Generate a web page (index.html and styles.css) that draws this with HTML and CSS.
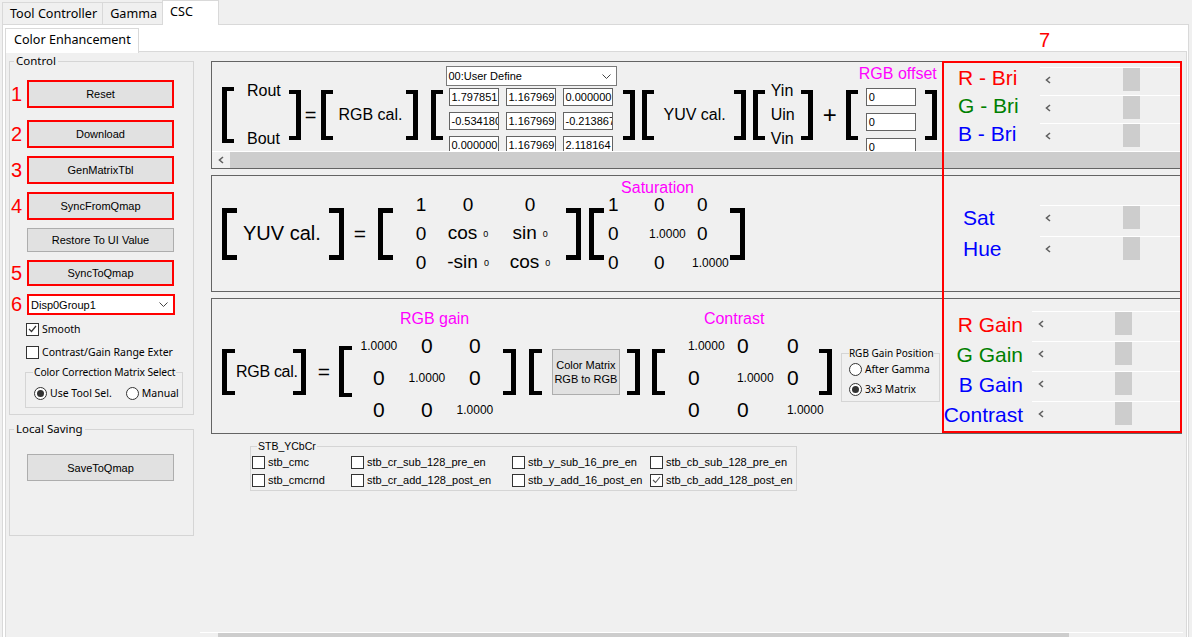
FILE: index.html
```html
<!DOCTYPE html>
<html lang="en">
<head>
  <meta charset="UTF-8">
  <title>CSC - Color Enhancement</title>
  <link rel="stylesheet" href="styles.css">
</head>
<body>

<div class="tabs">
  <div class="tab">Tool Controller</div>
  <div class="tab">Gamma</div>
  <div class="tab active">CSC</div>
</div>

<div class="tabpage">
  <div class="subtabs">
    <div class="subtab">Color Enhancement</div>
  </div>

  <div class="subpage">
    <div class="layout">

      <!-- left control column -->
      <div class="side">
        <fieldset class="group control">
          <legend>Control</legend>
          <div class="stack">
            <div class="btn-row first"><span class="num">1</span><button class="btn marked">Reset</button></div>
            <div class="btn-row"><span class="num">2</span><button class="btn marked">Download</button></div>
            <div class="btn-row"><span class="num">3</span><button class="btn marked">GenMatrixTbl</button></div>
            <div class="btn-row"><span class="num">4</span><button class="btn marked">SyncFromQmap</button></div>
            <div class="btn-row short"><span class="num"></span><button class="btn">Restore To UI Value</button></div>
            <div class="btn-row mid"><span class="num">5</span><button class="btn marked">SyncToQmap</button></div>
            <div class="btn-row combo-row"><span class="num">6</span>
              <div class="combo marked">Disp0Group1
                <svg width="9" height="5" viewBox="0 0 9 5"><path d="M0.5 0.5 L4.5 4.5 L8.5 0.5" fill="none" stroke="#444"/></svg>
              </div>
            </div>
            <label class="check smooth"><span class="box"><svg width="9" height="8" viewBox="0 0 9 8"><path d="M1 4 L3.5 6.5 L8 1" fill="none" stroke="#333" stroke-width="1.2"/></svg></span>Smooth</label>
            <label class="check range"><span class="box"></span>Contrast/Gain Range Exter</label>
            <fieldset class="group ccm">
              <legend>Color Correction Matrix Select</legend>
              <div class="radios">
                <label class="radio"><span class="dot on"></span>Use Tool Sel.</label>
                <label class="radio"><span class="dot"></span>Manual</label>
              </div>
            </fieldset>
          </div>
        </fieldset>

        <fieldset class="group saving">
          <legend>Local Saving</legend>
          <button class="btn">SaveToQmap</button>
        </fieldset>
      </div>

      <!-- formula panels -->
      <div class="main">
        <span class="mark7">7</span>
        <div class="redbox"></div>

        <div class="panel p1">
          <div class="view">
            <div class="formula">
              <span class="br open tall ml10"></span>
              <div class="pair ml13"><span>Rout</span><span>Bout</span></div>
              <span class="br close ml8"></span>
              <span class="eq ml4">=</span>
              <span class="br open ml5"></span>
              <span class="term ml5">RGB cal.</span>
              <span class="br close ml3"></span>
              <span class="br open ml13"></span>
              <div class="cells ml3">
                <div class="combo">00:User Define
                  <svg width="9" height="5" viewBox="0 0 9 5"><path d="M0.5 0.5 L4.5 4.5 L8.5 0.5" fill="none" stroke="#444"/></svg>
                </div>
                <div class="fields">
                  <span class="field">1.797851</span><span class="field">1.167969</span><span class="field">0.000000</span>
                  <span class="field">-0.534180</span><span class="field">1.167969</span><span class="field">-0.213867</span>
                  <span class="field">0.000000</span><span class="field">1.167969</span><span class="field">2.118164</span>
                </div>
              </div>
              <span class="br close ml6"></span>
              <span class="br open ml7"></span>
              <span class="term ml10">YUV cal.</span>
              <span class="br close ml8"></span>
              <span class="br open ml7"></span>
              <div class="vec ml6"><span>Yin</span><span>Uin</span><span>Vin</span></div>
              <span class="br close ml6"></span>
              <span class="op ml10">+</span>
              <span class="br open ml9"></span>
              <div class="offsets ml8">
                <span class="tag">RGB offset</span>
                <span class="field">0</span><span class="field">0</span><span class="field">0</span>
              </div>
              <span class="br close ml9"></span>
            </div>

            <div class="sliders">
              <div class="slider"><span class="sl-label red">R - Bri</span><div class="track"><svg class="larr" width="6" height="8" viewBox="0 0 6 8"><path d="M5 1 L1.5 4 L5 7" fill="none" stroke="#606060" stroke-width="1.6"/></svg><span class="knob"></span></div></div>
              <div class="slider"><span class="sl-label green">G - Bri</span><div class="track"><svg class="larr" width="6" height="8" viewBox="0 0 6 8"><path d="M5 1 L1.5 4 L5 7" fill="none" stroke="#606060" stroke-width="1.6"/></svg><span class="knob"></span></div></div>
              <div class="slider"><span class="sl-label blue">B - Bri</span><div class="track"><svg class="larr" width="6" height="8" viewBox="0 0 6 8"><path d="M5 1 L1.5 4 L5 7" fill="none" stroke="#606060" stroke-width="1.6"/></svg><span class="knob"></span></div></div>
            </div>
          </div>
          <div class="hscroll">
            <span class="sarrow"><svg width="6" height="8" viewBox="0 0 6 8"><path d="M5 1 L1.5 4 L5 7" fill="none" stroke="#606060" stroke-width="1.6"/></svg></span>
            <span class="sthumb"></span>
          </div>
        </div>

        <div class="panel p2">
          <div class="formula">
            <span class="br open ml10"></span>
            <span class="term ml6">YUV cal.</span>
            <span class="br close ml8"></span>
            <span class="eq ml10">=</span>
            <span class="br open ml12"></span>
            <div class="mx rot ml16">
              <span>1</span><span>0</span><span>0</span>
              <span>0</span><span>cos<small>0</small></span><span>sin<small>0</small></span>
              <span>0</span><span>-sin<small>0</small></span><span>cos<small>0</small></span>
            </div>
            <span class="br close ml9"></span>
            <span class="br open ml8"></span>
            <div class="mx-wrap sat">
              <span class="tag">Saturation</span>
              <div class="mx diag">
                <span class="d">1</span><span class="d">0</span><span class="d">0</span>
                <span class="d">0</span><span class="s">1.0000</span><span class="d">0</span>
                <span class="d">0</span><span class="d">0</span><span class="s">1.0000</span>
              </div>
            </div>
            <span class="br close"></span>
          </div>

          <div class="sliders">
            <div class="slider"><span class="sl-label blue">Sat</span><div class="track"><svg class="larr" width="6" height="8" viewBox="0 0 6 8"><path d="M5 1 L1.5 4 L5 7" fill="none" stroke="#606060" stroke-width="1.6"/></svg><span class="knob"></span></div></div>
            <div class="slider"><span class="sl-label blue">Hue</span><div class="track"><svg class="larr" width="6" height="8" viewBox="0 0 6 8"><path d="M5 1 L1.5 4 L5 7" fill="none" stroke="#606060" stroke-width="1.6"/></svg><span class="knob"></span></div></div>
          </div>
        </div>

        <div class="panel p3">
          <div class="formula">
            <span class="br open ml10"></span>
            <span class="term ml1">RGB cal.</span>
            <span class="br close mln5"></span>
            <span class="eq ml12">=</span>
            <span class="br open tall ml9"></span>
            <div class="mx-wrap gain ml7">
              <span class="tag">RGB gain</span>
              <div class="mx unit">
                <span class="s">1.0000</span><span>0</span><span>0</span>
                <span>0</span><span class="s">1.0000</span><span>0</span>
                <span>0</span><span>0</span><span class="s">1.0000</span>
              </div>
            </div>
            <span class="br close ml8"></span>
            <span class="br open ml13"></span>
            <button class="btn mtx ml10">Color Matrix<br>RGB to RGB</button>
            <span class="br close ml7"></span>
            <span class="br open ml12"></span>
            <div class="mx-wrap contrast ml23">
              <span class="tag">Contrast</span>
              <div class="mx unit left">
                <span class="s">1.0000</span><span>0</span><span>0</span>
                <span>0</span><span class="s">1.0000</span><span>0</span>
                <span>0</span><span>0</span><span class="s">1.0000</span>
              </div>
            </div>
            <span class="br close mln5"></span>
            <fieldset class="group gainpos ml9">
              <legend>RGB Gain Position</legend>
              <label class="radio"><span class="dot"></span>After Gamma</label>
              <label class="radio"><span class="dot on"></span>3x3 Matrix</label>
            </fieldset>
          </div>

          <div class="sliders">
            <div class="slider"><span class="sl-label red">R Gain</span><div class="track"><svg class="larr" width="6" height="8" viewBox="0 0 6 8"><path d="M5 1 L1.5 4 L5 7" fill="none" stroke="#606060" stroke-width="1.6"/></svg><span class="knob"></span></div></div>
            <div class="slider"><span class="sl-label green">G Gain</span><div class="track"><svg class="larr" width="6" height="8" viewBox="0 0 6 8"><path d="M5 1 L1.5 4 L5 7" fill="none" stroke="#606060" stroke-width="1.6"/></svg><span class="knob"></span></div></div>
            <div class="slider"><span class="sl-label blue">B Gain</span><div class="track"><svg class="larr" width="6" height="8" viewBox="0 0 6 8"><path d="M5 1 L1.5 4 L5 7" fill="none" stroke="#606060" stroke-width="1.6"/></svg><span class="knob"></span></div></div>
            <div class="slider"><span class="sl-label blue">Contrast</span><div class="track"><svg class="larr" width="6" height="8" viewBox="0 0 6 8"><path d="M5 1 L1.5 4 L5 7" fill="none" stroke="#606060" stroke-width="1.6"/></svg><span class="knob"></span></div></div>
          </div>
        </div>

        <fieldset class="group stb">
          <legend>STB_YCbCr</legend>
          <div class="stb-grid">
            <label class="check"><span class="box"></span>stb_cmc</label>
            <label class="check"><span class="box"></span>stb_cr_sub_128_pre_en</label>
            <label class="check"><span class="box"></span>stb_y_sub_16_pre_en</label>
            <label class="check"><span class="box"></span>stb_cb_sub_128_pre_en</label>
            <label class="check"><span class="box"></span>stb_cmcrnd</label>
            <label class="check"><span class="box"></span>stb_cr_add_128_post_en</label>
            <label class="check"><span class="box"></span>stb_y_add_16_post_en</label>
            <label class="check"><span class="box"><svg width="9" height="8" viewBox="0 0 9 8"><path d="M1 4 L3.5 6.5 L8 1" fill="none" stroke="#555" stroke-width="1.1"/></svg></span>stb_cb_add_128_post_en</label>
          </div>
        </fieldset>
      </div>
    </div>

    <div class="hbar"><span></span></div>
  </div>
</div>

</body>
</html>
```

FILE: styles.css
```css
* {
  box-sizing: border-box;
}

body {
  margin: 0;
  width: 1192px;
  height: 637px;
  overflow: hidden;
  background: #f0f0f0;
  font-family: "Liberation Sans", Arial, sans-serif;
  font-size: 11px;
  color: #000;
}

/* ---- top tabs ---- */
.tabs {
  display: flex;
  align-items: flex-end;
  height: 24px;
  padding-left: 2px;
}

.tab {
  height: 22px;
  padding: 0 5px 0 7px;
  margin-right: -1px;
  border: 1px solid #d9d9d9;
  border-bottom: 0;
  font-family: "Noto Sans", sans-serif;
  font-size: 12.6px;
  line-height: 21px;
}

.tab.active {
  position: relative;
  z-index: 1;
  width: 57px;
  height: 25px;
  margin-bottom: -1px;
  padding: 0 0 0 7px;
  background: #fff;
  line-height: 21px;
}

.tabpage {
  display: flex;
  flex-direction: column;
  width: 1187px;
  height: 616px;
  margin-left: 2px;
  padding: 3px 1px 0 2px;
  border: 1px solid #d9d9d9;
  background: #fff;
}

.subtabs {
  display: flex;
  height: 23px;
}

.subtab {
  position: relative;
  z-index: 1;
  height: 25px;
  padding: 0 7px 0 8px;
  border: 1px solid #d9d9d9;
  border-bottom: 0;
  background: #fff;
  font-family: "Noto Sans", sans-serif;
  font-size: 12.6px;
  line-height: 22px;
}

.subpage {
  flex: 1;
  display: flex;
  flex-direction: column;
  border: 1px solid #d9d9d9;
  background: #f0f0f0;
}

.layout {
  display: flex;
  padding: 2px 0 0 3px;
}

/* ---- group boxes ---- */
.group {
  margin: 0;
  padding: 0;
  min-width: 0;
  border: 1px solid #d5d5d5;
}

.group legend {
  margin-left: 4px;
  padding: 0 2px;
  font-family: "Noto Sans", sans-serif;
  font-size: 11.5px;
  line-height: 14px;
  white-space: nowrap;
}

/* ---- left column ---- */
.side {
  flex: none;
  width: 185px;
  display: flex;
  flex-direction: column;
  gap: 7px;
}

.control {
  padding: 12px 0 6px 0;
}

.stack {
  display: flex;
  flex-direction: column;
  gap: 8px;
}

.btn-row {
  display: flex;
  height: 28px;
}

.btn-row.first {
  margin-bottom: 4px;
}

.btn-row.short {
  height: 24px;
}

.btn-row.mid {
  height: 26px;
}

.btn-row.combo-row {
  height: 21px;
}

.num {
  flex: none;
  width: 17px;
  padding-left: 1px;
  display: flex;
  align-items: center;
  color: #f00;
  font-size: 20px;
}

.btn {
  flex: none;
  width: 147px;
  height: 100%;
  padding: 0;
  border: 1px solid #adadad;
  background: #e1e1e1;
  color: #000;
  font: 11px "Liberation Sans", Arial, sans-serif;
}

.btn.marked {
  border: 2px solid #f00;
}

.combo {
  display: flex;
  align-items: center;
  justify-content: space-between;
  padding: 0 5px 0 2px;
  border: 1px solid #7a7a7a;
  background: #fff;
}

.combo-row .combo {
  width: 148px;
}

.combo.marked {
  border: 2px solid #f00;
}

.check {
  display: flex;
  align-items: center;
  gap: 3px;
  height: 16px;
  padding-left: 16px;
  font-family: "Noto Sans", sans-serif;
  font-size: 10.5px;
  white-space: nowrap;
}

.check.smooth {
  margin-top: -2px;
}

.check.range {
  margin-top: -1px;
}

.box {
  flex: none;
  width: 13px;
  height: 13px;
  display: flex;
  align-items: center;
  justify-content: center;
  border: 1px solid #333;
  background: #fff;
}

.ccm {
  margin: -2px 10px 0 15px;
}

.ccm legend {
  margin-left: 7px;
  padding: 0 1px;
  font-size: 10.3px;
  line-height: 13px;
  letter-spacing: -0.1px;
}

.radios {
  display: flex;
  align-items: center;
  gap: 14px;
  height: 28px;
  padding-left: 8px;
}

.radio {
  display: flex;
  align-items: center;
  gap: 3px;
  font-family: "Noto Sans", sans-serif;
  font-size: 10.5px;
  white-space: nowrap;
}

.dot {
  flex: none;
  width: 13px;
  height: 13px;
  display: flex;
  align-items: center;
  justify-content: center;
  border: 1px solid #333;
  border-radius: 50%;
  background: #fff;
}

.dot.on::after {
  content: "";
  width: 7px;
  height: 7px;
  border-radius: 50%;
  background: #333;
}

.saving {
  height: 114px;
}

.saving .btn {
  display: block;
  height: 27px;
  margin: 18px 0 0 17px;
}

/* ---- main column ---- */
.main {
  position: relative;
  flex: none;
  width: 971px;
  margin: 7px 0 0 17px;
  display: flex;
  flex-direction: column;
  gap: 6px;
}

.mark7 {
  position: absolute;
  left: 828px;
  top: -31px;
  color: #f00;
  font-size: 20px;
  line-height: 20px;
}

.redbox {
  position: absolute;
  left: 731px;
  top: 0;
  z-index: 2;
  width: 240px;
  height: 372px;
  border: 2px solid #f00;
  pointer-events: none;
}

.panel {
  display: flex;
  border: 1px solid #646464;
}

.p1 {
  height: 108px;
  flex-direction: column;
}

.p2 {
  height: 117px;
}

.p3 {
  height: 136px;
}

.view {
  display: flex;
  height: 89px;
  overflow: hidden;
}

.hscroll {
  display: flex;
  height: 17px;
  border-top: 1px solid #fff;
}

.sarrow {
  width: 18px;
  display: flex;
  align-items: center;
  justify-content: center;
}

.sthumb {
  flex: 1;
  background: #cdcdcd;
}

.formula {
  flex: 1;
  min-width: 0;
  display: flex;
  align-items: center;
}

.formula > * {
  flex: none;
}

.p1 .formula {
  padding-top: 17px;
}

.p3 .formula {
  padding-top: 11px;
}

/* spacing helpers for the hand placed formula pieces */
.mln5 { margin-left: -5px; }
.ml1 { margin-left: 1px; }
.ml3 { margin-left: 3px; }
.ml4 { margin-left: 4px; }
.ml5 { margin-left: 5px; }
.ml6 { margin-left: 6px; }
.ml7 { margin-left: 7px; }
.ml8 { margin-left: 8px; }
.ml9 { margin-left: 9px; }
.ml10 { margin-left: 10px; }
.ml12 { margin-left: 12px; }
.ml13 { margin-left: 13px; }
.ml16 { margin-left: 16px; }
.ml23 { margin-left: 23px; }

/* big square brackets */
.br {
  width: 12px;
  height: 50px;
  border: 4px solid #000;
}

.br.open {
  border-right: 0;
  border-left-width: 5px;
}

.br.close {
  border-left: 0;
  border-right-width: 5px;
}

.p1 .br.tall {
  height: 56px;
}

.p2 .br {
  width: 15px;
  height: 52px;
  border-width: 5px;
}

.p2 .br.open { border-right: 0; }
.p2 .br.close { border-left: 0; }

.p3 .br {
  width: 13px;
  height: 46px;
}

.p3 .br.tall {
  height: 51px;
}

.term {
  font-size: 16px;
  white-space: nowrap;
}

.p2 .term {
  font-size: 20px;
}

.p3 .term {
  letter-spacing: -0.3px;
}

.eq {
  font-size: 20px;
}

.p2 .eq,
.p3 .eq {
  font-size: 21px;
}

.op {
  font-size: 24px;
}

.pair {
  height: 66px;
  display: flex;
  flex-direction: column;
  justify-content: space-between;
  font-size: 16px;
  line-height: 18px;
}

.vec {
  display: flex;
  flex-direction: column;
  gap: 6px;
  font-size: 16px;
  line-height: 18px;
}

.cells {
  align-self: flex-start;
  width: 171px;
  margin-top: -13px;
}

.cells .combo {
  height: 20px;
}

.fields {
  display: grid;
  grid-template-columns: repeat(3, 50px);
  gap: 6px 7px;
  margin-top: 2px;
  padding-left: 3px;
}

.field {
  height: 18px;
  padding: 0 2px;
  overflow: hidden;
  white-space: nowrap;
  border: 1px solid #646464;
  background: #fff;
  line-height: 16px;
}

.offsets {
  align-self: flex-start;
  width: 50px;
  margin-top: -14px;
  display: flex;
  flex-direction: column;
  gap: 7px;
}

.offsets .tag {
  margin: 0 0 -2px -7px;
  line-height: 18px;
}

.tag {
  color: #f0f;
  font-size: 16px;
  line-height: 16px;
  white-space: nowrap;
}

/* matrices */
.mx-wrap {
  display: flex;
  flex-direction: column;
}

.mx {
  display: grid;
  grid-auto-rows: 29px;
  align-items: center;
  font-size: 19px;
  line-height: 22px;
  white-space: nowrap;
}

.mx small {
  margin-left: 6px;
  font-size: 9px;
  vertical-align: middle;
}

.mx .s {
  font-size: 12px;
}

.mx.rot {
  grid-template-columns: 24px 70px 54px;
  justify-items: center;
}

.sat {
  margin-left: -1px;
}

.sat .tag {
  margin: -8.5px 0 -3.5px 18px;
  line-height: 12px;
}

.mx.diag {
  grid-template-columns: 46px 43px 38px;
  justify-items: start;
}

.mx.diag .d {
  margin-left: 5px;
}

.p3 .mx-wrap {
  margin-top: 13px;
}

.p3 .mx {
  grid-auto-rows: 32px;
  font-size: 21px;
}

.gain .tag {
  margin: -19px 0 3px 41px;
}

.contrast .tag {
  margin: -19px 0 3px 16px;
}

.mx.unit {
  grid-template-columns: 40px 56px 40px;
  justify-items: center;
}

.mx.unit.left {
  grid-template-columns: 49px 50px 37px;
  justify-items: start;
}

.btn.mtx {
  width: 68px;
  height: 46px;
  line-height: 14px;
}

.gainpos {
  width: 99px;
  margin-top: 6px;
  padding: 0 0 2px 7px;
}

.gainpos legend {
  margin-left: 0;
  padding: 0;
  font-size: 10px;
  line-height: 12px;
}

.gainpos .radio {
  height: 20px;
  font-size: 10.3px;
}

/* sliders */
.sliders {
  flex: none;
  width: 238px;
  display: flex;
  flex-direction: column;
}

.p1 .sliders { padding-top: 5px; }
.p2 .sliders { padding-top: 29px; }
.p3 .sliders { padding-top: 12px; }

.slider {
  display: flex;
  height: 31px;
}

.p3 .slider {
  height: 30px;
}

.sl-label {
  flex: none;
  width: 97px;
  padding-left: 15px;
  font-size: 21px;
  line-height: 22px;
  white-space: nowrap;
}

.p2 .sl-label {
  padding: 2px 0 0 20px;
}

.p3 .sl-label {
  width: 89px;
  padding: 3px 9px 0 0;
  text-align: right;
}

.red { color: #f00; }
.green { color: #008000; }
.blue { color: #00f; }

.track {
  flex: 1;
  display: flex;
  align-items: flex-start;
  padding-left: 5px;
  border-top: 1px solid #fff;
}

.p3 .track {
  padding-left: 6px;
}

.larr {
  flex: none;
  margin: 8px 72px 0 0;
}

.p3 .larr {
  margin-right: 71px;
}

.knob {
  flex: none;
  width: 17px;
  height: 23px;
  background: #cdcdcd;
}

/* checkbox group under the panels */
.stb {
  align-self: flex-start;
  width: 547px;
  margin-left: 39px;
  padding: 0 0 1px 1px;
}

.stb legend {
  margin-left: 5px;
  padding: 0 1px;
  font-family: "Liberation Sans", Arial, sans-serif;
  font-size: 10.5px;
  line-height: 12px;
}

.stb-grid {
  display: grid;
  grid-template-columns: 99px 161px 138px auto;
  grid-auto-rows: 18px;
  margin-top: 1px;
}

.stb .check {
  height: 18px;
  padding-left: 0;
  font-family: "Liberation Sans", Arial, sans-serif;
  font-size: 11px;
}

/* bottom scroll bar */
.hbar {
  margin: auto 0 0 194px;
  width: 983px;
  height: 6px;
  padding-left: 18px;
  border-top: 1px solid #fff;
}

.hbar span {
  display: block;
  width: 851px;
  height: 5px;
  background: #cdcdcd;
}
```
